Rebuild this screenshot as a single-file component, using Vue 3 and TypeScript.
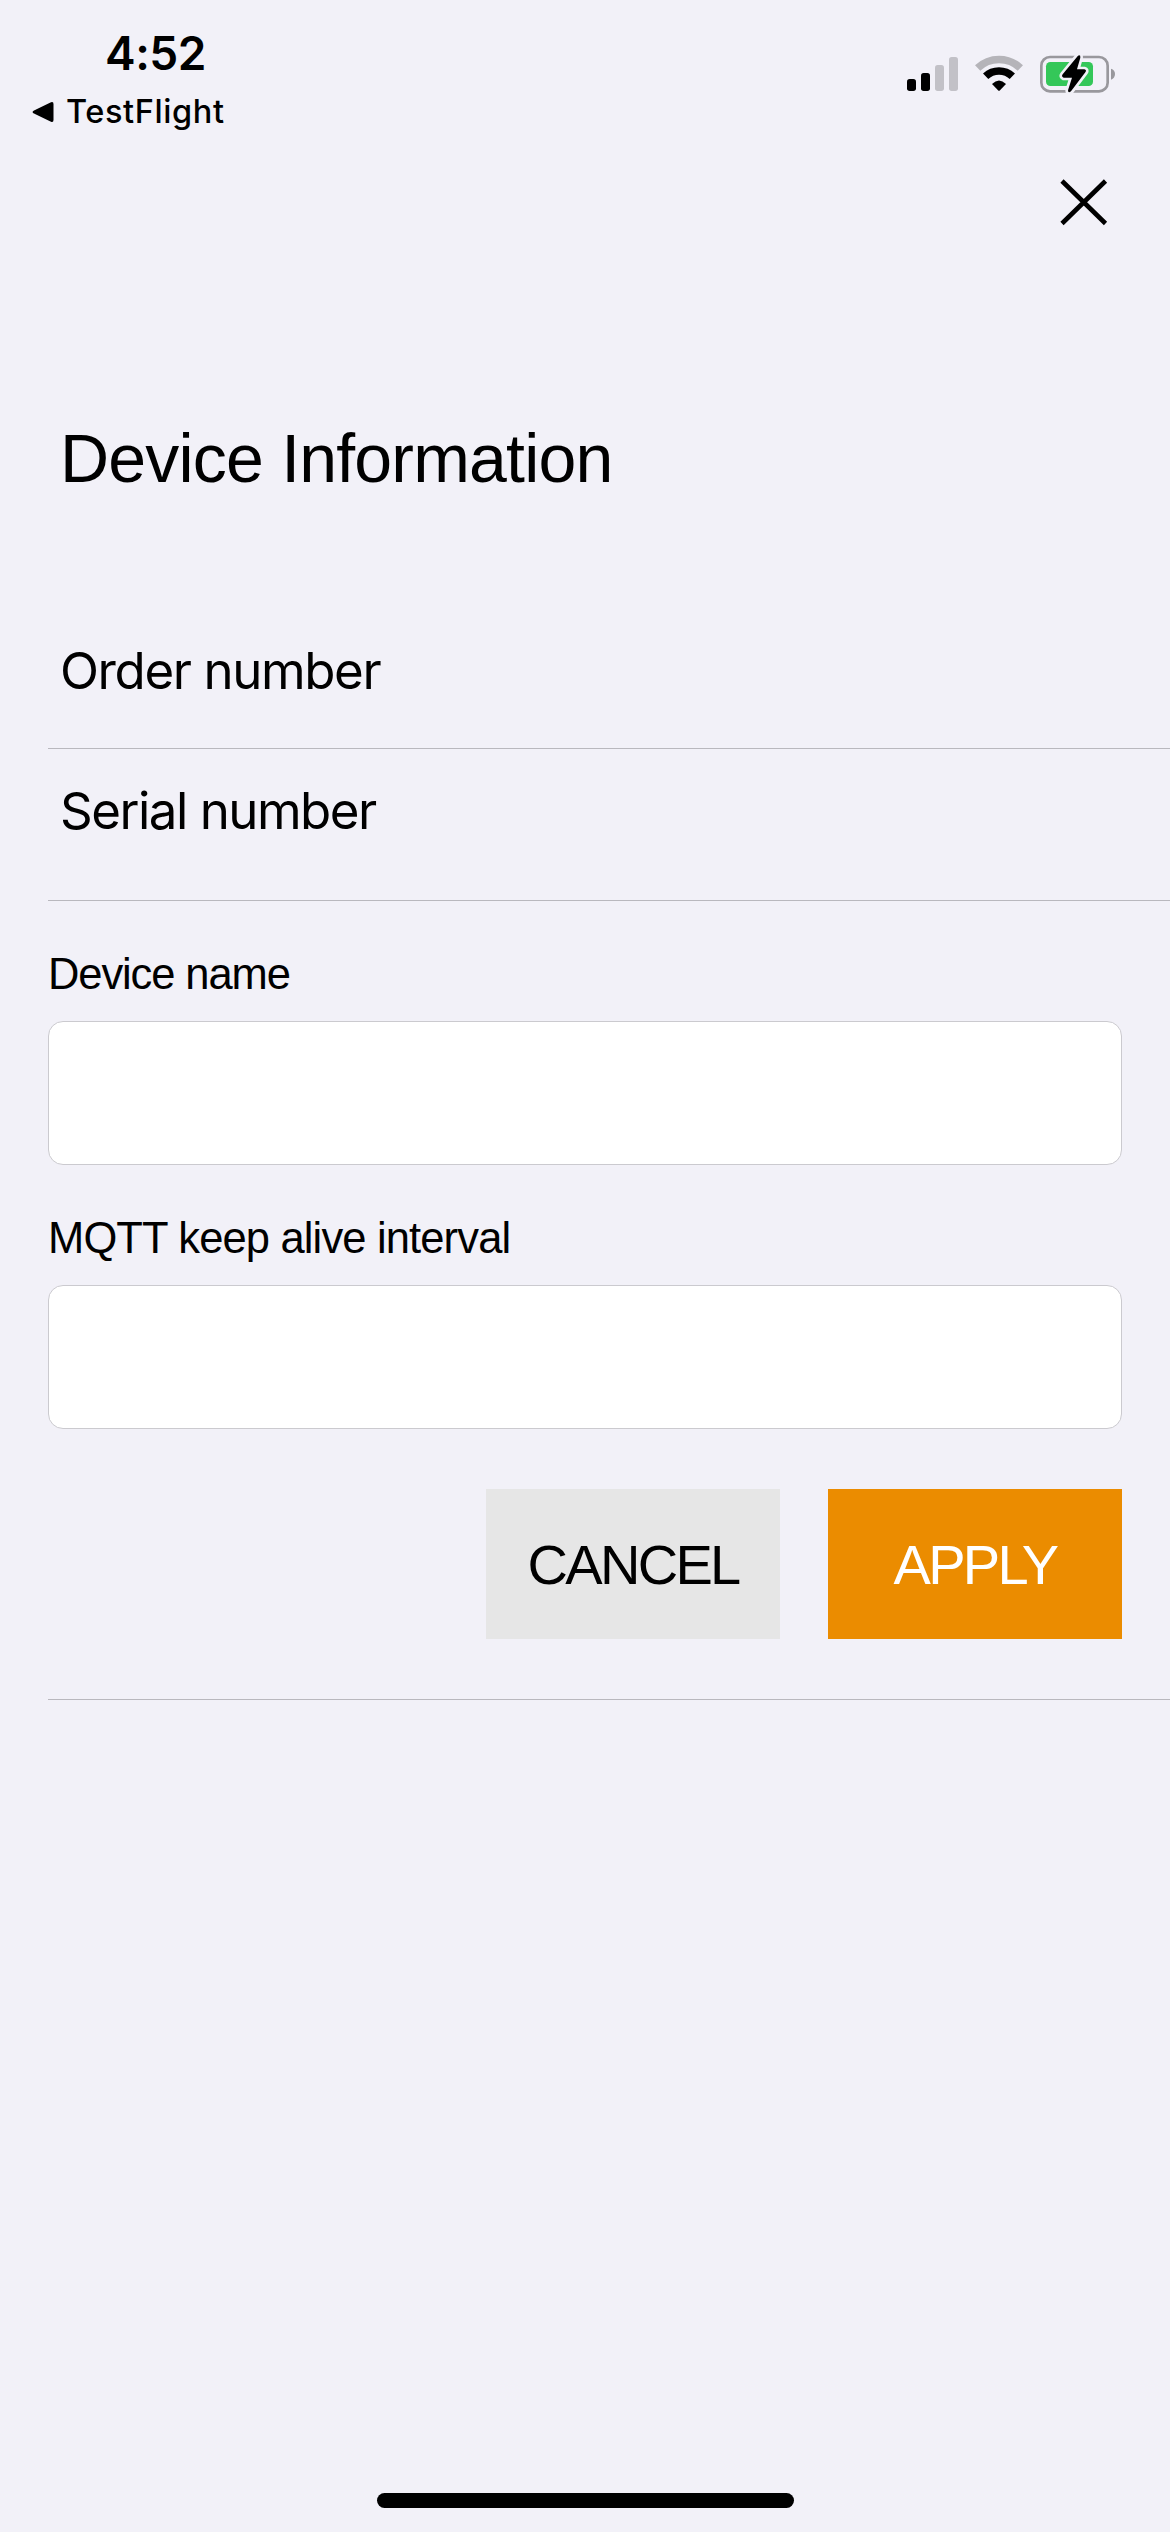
<script setup lang="ts">
import { ref } from 'vue'

interface Field {
  id: string
  label: string
  tone: string
}

const infoRows: string[] = ['Order number', 'Serial number']
const fields: Field[] = [
  { id: 'device-name', label: 'Device name', tone: 'tight' },
  { id: 'keep-alive', label: 'MQTT keep alive interval', tone: 'regular' },
]
const values = ref<Record<string, string>>({ 'device-name': '', 'keep-alive': '' })
</script>

<template>
  <main class="screen">
    <header class="status">
      <div class="status-left">
        <div class="time">4:52</div>
        <div class="back">
          <svg width="24" height="24" viewBox="0 0 24 24">
            <path d="M3 10.4 L20 2.2 Q22.5 1.2 22.5 4 V20 Q22.5 22.8 20 21.8 L3 13.6 Q.2 12 3 10.4Z" />
          </svg>
          <span>TestFlight</span>
        </div>
      </div>
      <svg class="indicators" width="240" height="70" viewBox="0 0 720 210">
        <rect x="51" y="117" width="27" height="36" rx="8" />
        <rect x="93" y="99" width="27" height="54" rx="8" />
        <rect x="135" y="75" width="27" height="78" rx="8" fill="#c2c1c7" />
        <rect x="177" y="51" width="27" height="102" rx="8" fill="#c2c1c7" />
        <path d="M263 84 A93 93 0 0 1 391 84" fill="none" stroke="#b5b4b9" stroke-width="23" />
        <path d="M287 109 A58 58 0 0 1 367 109" fill="none" stroke="#000" stroke-width="23" />
        <path d="M306 132 Q327 111 348 132 L330 151 Q327 154 324 151Z" />
        <rect x="454" y="51" width="199" height="103" rx="26" fill="none" stroke="#99989d" stroke-width="8" />
        <path d="M663 86 Q675 90 675 102 Q675 114 663 119Z" fill="#99989d" />
        <rect x="468" y="66" width="141" height="72" rx="13" fill="#34c759" />
        <path
          d="M564 47 Q572 43 571 53 L561 88 H583 Q591 90 586 97 L543 154 Q534 161 534 151 L546 113 H521 Q513 110 518 103Z"
          stroke="#f2f1f8" stroke-width="16" stroke-linejoin="round" paint-order="stroke"
        />
      </svg>
    </header>

    <nav class="toolbar">
      <button class="close" type="button" aria-label="Close">
        <svg width="90" height="90" viewBox="0 0 90 90">
          <path d="M22 21 L65.5 63.5 M65.5 21 L22 63.5" fill="none" stroke="#000" stroke-width="4.6" />
        </svg>
      </button>
    </nav>

    <h1 class="title">Device Information</h1>

    <section class="content">
      <div v-for="row in infoRows" :key="row" class="row">{{ row }}</div>
      <form class="form" @submit.prevent>
        <div v-for="field in fields" :key="field.id" class="field">
          <label :for="field.id" :class="field.tone">{{ field.label }}</label>
          <input :id="field.id" v-model="values[field.id]" type="text" />
        </div>
        <div class="actions">
          <button class="btn cancel" type="button">CANCEL</button>
          <button class="btn apply" type="submit">APPLY</button>
        </div>
      </form>
    </section>

    <footer class="home"><div class="home-bar"></div></footer>
  </main>
</template>

<style>
body {
  background: #f2f1f8;
}
</style>

<style scoped>
.screen {
  box-sizing: border-box;
  display: flex;
  flex-direction: column;
  width: 1170px;
  height: 2532px;
  overflow: hidden;
  background: #f2f1f8;
  color: #000;
  font-family: "Liberation Sans", Arial, sans-serif;
}
.status {
  display: flex;
  justify-content: space-between;
  flex: none;
  height: 160px;
  padding: 0 40px 0 31px;
  box-sizing: border-box;
  font-family: Inter, sans-serif;
}
.status-left {
  padding-top: 23px;
}
.time {
  padding-left: 74px;
  font-size: 46px;
  line-height: 60px;
  font-weight: 600;
  letter-spacing: -0.5px;
  white-space: nowrap;
}
.back {
  display: flex;
  align-items: center;
  gap: 11px;
  margin-top: 8px;
  font-size: 32.5px;
  line-height: 41px;
  font-weight: 500;
  letter-spacing: 0.6px;
  white-space: nowrap;
}
.indicators {
  margin-top: 40px;
}
.toolbar {
  display: flex;
  justify-content: flex-end;
  flex: none;
  height: 90px;
  padding-right: 40px;
}
button {
  border: 0;
  padding: 0;
  background: none;
  font-family: inherit;
}
.close,
.close svg {
  display: block;
  width: 90px;
  height: 90px;
}
.title {
  flex: none;
  box-sizing: border-box;
  height: 350px;
  margin: 0;
  padding: 168px 0 0 60px;
  font-size: 68px;
  line-height: 80px;
  font-weight: 400;
  letter-spacing: -0.8px;
  white-space: nowrap;
}
.content {
  margin-left: 48px;
}
.row {
  box-sizing: border-box;
  height: 149px;
  padding: 41px 0 0 12px;
  border-bottom: 1px solid #b9b8be;
  font-family: Inter, sans-serif;
  font-size: 51px;
  line-height: 60px;
  letter-spacing: -1.4px;
}
.row + .row {
  height: 152px;
  padding-top: 32px;
  letter-spacing: -1.5px;
}
.form {
  padding: 48px 48px 60px 0;
  border-bottom: 1px solid #b9b8be;
}
.field + .field {
  margin-top: 48px;
}
label {
  display: block;
  margin-bottom: 22px;
  font-size: 43.5px;
  line-height: 50px;
  white-space: nowrap;
}
.tight {
  letter-spacing: -1.1px;
}
.regular {
  letter-spacing: -0.85px;
}
input {
  display: block;
  box-sizing: border-box;
  width: 100%;
  height: 144px;
  padding: 0 24px;
  border: 1px solid #cbcacf;
  border-radius: 15px;
  outline: none;
  background: #fff;
  font: inherit;
  font-size: 43px;
}
.actions {
  display: flex;
  justify-content: flex-end;
  gap: 48px;
  margin-top: 60px;
}
.btn {
  width: 294px;
  height: 150px;
  padding-top: 1px;
  font-size: 56px;
  line-height: 64px;
  letter-spacing: -2.7px;
}
.cancel {
  background: #e6e6e6;
  color: #000;
}
.apply {
  background: #eb8c00;
  color: #fff;
}
.home {
  display: flex;
  justify-content: center;
  margin-top: auto;
  padding-bottom: 24px;
}
.home-bar {
  width: 417px;
  height: 15px;
  border-radius: 8px;
  background: #000;
}
</style>
